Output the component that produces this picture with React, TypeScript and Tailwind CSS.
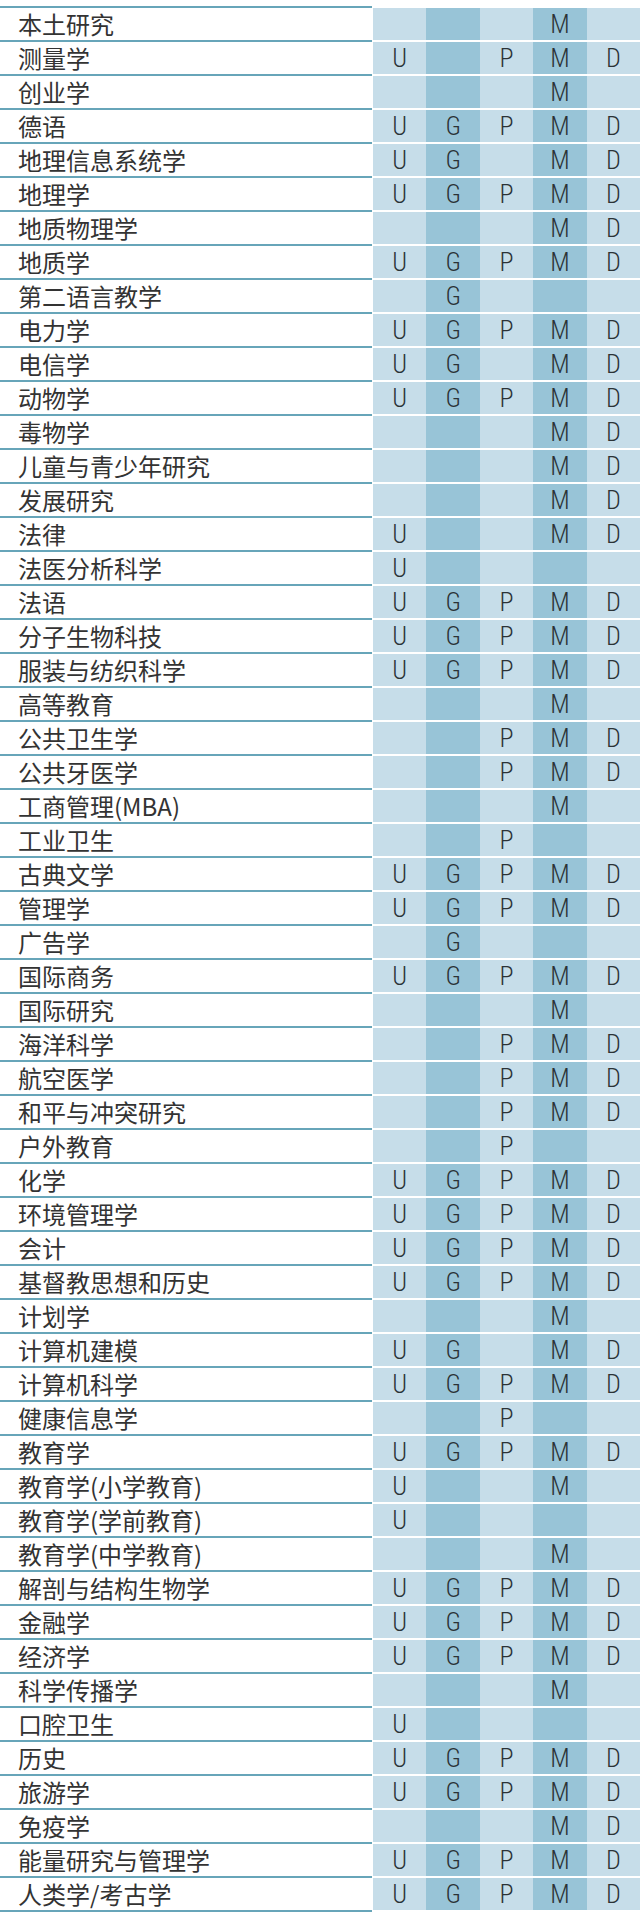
const rows: [string, string][] = [
  ["本土研究", "___M_"],
  ["测量学", "U_PMD"],
  ["创业学", "___M_"],
  ["德语", "UGPMD"],
  ["地理信息系统学", "UG_MD"],
  ["地理学", "UGPMD"],
  ["地质物理学", "___MD"],
  ["地质学", "UGPMD"],
  ["第二语言教学", "_G___"],
  ["电力学", "UGPMD"],
  ["电信学", "UG_MD"],
  ["动物学", "UGPMD"],
  ["毒物学", "___MD"],
  ["儿童与青少年研究", "___MD"],
  ["发展研究", "___MD"],
  ["法律", "U__MD"],
  ["法医分析科学", "U____"],
  ["法语", "UGPMD"],
  ["分子生物科技", "UGPMD"],
  ["服装与纺织科学", "UGPMD"],
  ["高等教育", "___M_"],
  ["公共卫生学", "__PMD"],
  ["公共牙医学", "__PMD"],
  ["工商管理(MBA)", "___M_"],
  ["工业卫生", "__P__"],
  ["古典文学", "UGPMD"],
  ["管理学", "UGPMD"],
  ["广告学", "_G___"],
  ["国际商务", "UGPMD"],
  ["国际研究", "___M_"],
  ["海洋科学", "__PMD"],
  ["航空医学", "__PMD"],
  ["和平与冲突研究", "__PMD"],
  ["户外教育", "__P__"],
  ["化学", "UGPMD"],
  ["环境管理学", "UGPMD"],
  ["会计", "UGPMD"],
  ["基督教思想和历史", "UGPMD"],
  ["计划学", "___M_"],
  ["计算机建模", "UG_MD"],
  ["计算机科学", "UGPMD"],
  ["健康信息学", "__P__"],
  ["教育学", "UGPMD"],
  ["教育学(小学教育)", "U__M_"],
  ["教育学(学前教育)", "U____"],
  ["教育学(中学教育)", "___M_"],
  ["解剖与结构生物学", "UGPMD"],
  ["金融学", "UGPMD"],
  ["经济学", "UGPMD"],
  ["科学传播学", "___M_"],
  ["口腔卫生", "U____"],
  ["历史", "UGPMD"],
  ["旅游学", "UGPMD"],
  ["免疫学", "___MD"],
  ["能量研究与管理学", "UGPMD"],
  ["人类学/考古学", "UGPMD"],
];

function DegreeCell({ mark, dark }: { mark: string; dark: boolean }) {
  return (
    <div
      className={`flex-1 border-t-2 border-white flex items-center justify-center text-[26px] leading-[30px] font-light text-[#2b3236] font-['Roboto_Condensed','Roboto',sans-serif] ${
        dark ? "bg-[#98c4d7]" : "bg-[#c6dde9]"
      }`}
    >
      {mark === "_" ? "" : mark}
    </div>
  );
}

export default function App() {
  return (
    <div className="w-[640px] bg-white pt-[6px]">
      {rows.map(([name, marks]) => (
        <div key={name} className="flex h-[34px]">
          {/* Subject name */}
          <div className="w-[372px] border-t-2 border-[#67a5b9] flex items-center pl-[18px] text-[24px] text-[#333333] font-['Noto_Sans_CJK_SC',sans-serif] leading-[30px]">
            {name}
          </div>
          <div className="w-px" />
          {/* Degree columns */}
          {marks.split("").map((m, i) => (
            <DegreeCell key={i} mark={m} dark={i % 2 === 1} />
          ))}
        </div>
      ))}
      <div className="w-[372px] h-[2px] bg-[#67a5b9]" />
    </div>
  );
}
